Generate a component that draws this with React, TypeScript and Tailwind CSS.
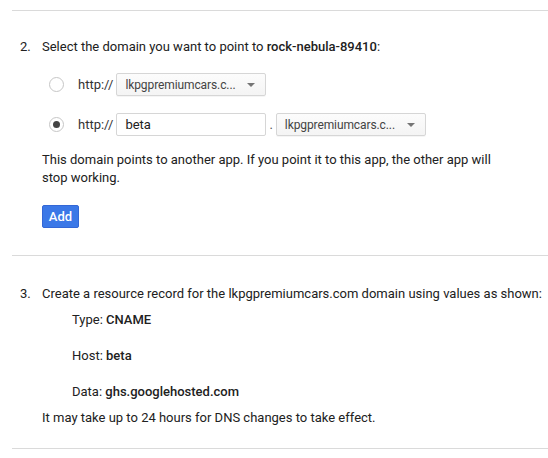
import { useState } from 'react';

function Radio({ checked, onClick }: { checked: boolean; onClick: () => void }) {
  return (
    <button
      onClick={onClick}
      className="w-[15px] h-[15px] rounded-full border border-[#c6c6c6] bg-white flex items-center justify-center shrink-0"
    >
      {checked && <span className="w-[7px] h-[7px] rounded-full bg-[#444]" />}
    </button>
  );
}

function Select({ value }: { value: string }) {
  return (
    <div className="w-[150px] h-[23px] border border-[#d6d6d6] rounded-[2px] bg-gradient-to-b from-[#fcfcfc] to-[#f4f4f4] shadow-[0_1px_0_rgba(0,0,0,0.04)] flex items-center justify-between pl-[8px] pr-[10px] text-[#444]">
      <span className="text-[12px] tracking-[-0.1px]">{value}</span>
      <svg width="8" height="4" viewBox="0 0 8 4">
        <path d="M0 0h8L4 4z" fill="#757575" />
      </svg>
    </div>
  );
}

export default function App() {
  const [choice, setChoice] = useState(1);

  return (
    <div className="w-[548px] h-[458px] bg-white pl-3 pt-[10px] text-[13px] leading-[18px] text-[#212121] font-['Roboto',sans-serif]">
      <section className="border-t border-[#dadada] pt-[27px] pb-[27px]">
        <div className="flex">
          <span className="w-[22px] ml-2">2.</span>
          <div>
            <p>
              Select the domain you want to point to <span className="font-medium">rock-nebula-89410</span>:
            </p>

            <div className="flex items-center mt-[17px] ml-[7px]">
              <Radio checked={choice === 0} onClick={() => setChoice(0)} />
              <span className="ml-[14px] mr-[3px] text-[#333]">http://</span>
              <Select value="lkpgpremiumcars.c..." />
            </div>

            <div className="flex items-center mt-[17px] ml-[7px]">
              <Radio checked={choice === 1} onClick={() => setChoice(1)} />
              <span className="ml-[14px] mr-[3px] text-[#333]">http://</span>
              <div className="w-[150px] h-[23px] border border-[#d6d6d6] rounded-[2px] bg-white flex items-center pl-[8px]">
                beta
              </div>
              <span className="mx-[3px] text-[#555]">.</span>
              <Select value="lkpgpremiumcars.c..." />
            </div>

            <p className="mt-[15px] w-[470px]">
              This domain points to another app. If you point it to this app, the other app will stop working.
            </p>

            <button className="mt-[18px] h-[23px] w-[37px] rounded-[2px] bg-[#3b78e7] border border-[#3367d6] text-white font-medium">
              Add
            </button>
          </div>
        </div>
      </section>

      <section className="border-t border-[#dadada] pt-[29px] pb-[21px]">
        <div className="flex">
          <span className="w-[22px] ml-2">3.</span>
          <div>
            <p>Create a resource record for the lkpgpremiumcars.com domain using values as shown:</p>
            <div className="ml-[30px] mt-[8px] flex flex-col gap-[18px]">
              <p>
                Type: <span className="font-medium">CNAME</span>
              </p>
              <p>
                Host: <span className="font-medium">beta</span>
              </p>
              <p>
                Data: <span className="font-medium">ghs.googlehosted.com</span>
              </p>
            </div>
            <p className="mt-[8px]">It may take up to 24 hours for DNS changes to take effect.</p>
          </div>
        </div>
      </section>
      <div className="border-t border-[#dadada]" />
    </div>
  );
}
